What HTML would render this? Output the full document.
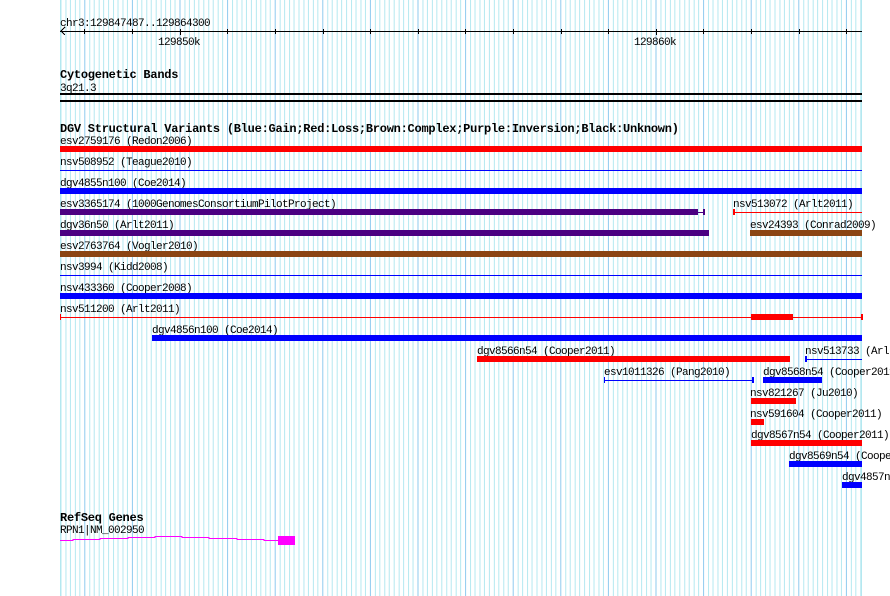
<!DOCTYPE html>
<html><head><meta charset="utf-8"><style>
html,body{margin:0;padding:0;background:#fff;width:890px;height:596px;overflow:hidden}
text{font-family:"Liberation Mono","DejaVu Sans Mono",monospace;font-size:11px;letter-spacing:-0.6px;fill:#000}
.b{font-weight:bold;font-size:12px;letter-spacing:-0.25px}
</style></head><body>
<svg width="890" height="596" xmlns="http://www.w3.org/2000/svg" shape-rendering="crispEdges">
<defs>
<pattern id="g" patternUnits="userSpaceOnUse" x="36.7" y="0" width="47.6" height="596">
<rect x="0" y="0" width="1" height="596" fill="#8ecaee"/>
<rect x="4.76" width="1" height="596" fill="#b4e8f0"/>
<rect x="9.52" width="1" height="596" fill="#b4e8f0"/>
<rect x="14.28" width="1" height="596" fill="#b4e8f0"/>
<rect x="19.04" width="1" height="596" fill="#b4e8f0"/>
<rect x="23.8" width="1" height="596" fill="#b4e8f0"/>
<rect x="28.56" width="1" height="596" fill="#b4e8f0"/>
<rect x="33.32" width="1" height="596" fill="#b4e8f0"/>
<rect x="38.08" width="1" height="596" fill="#b4e8f0"/>
<rect x="42.84" width="1" height="596" fill="#b4e8f0"/>
</pattern>
</defs>
<rect x="60" y="0" width="803" height="596" fill="url(#g)"/>
<rect x="60" y="0" width="1" height="596" fill="#b4e8f0"/>
<rect x="861" y="0" width="1" height="596" fill="#b4e8f0"/>

<text x="60" y="26">chr3:129847487..129864300</text>
<rect x="60" y="31" width="802" height="1" fill="#000"/>
<path d="M65 27 L61 31 L65 35" fill="none" stroke="#000" stroke-width="1"/>
<g fill="#000">
<rect x="84" y="29" width="1" height="5"/><rect x="132" y="29" width="1" height="5"/><rect x="180" y="29" width="1" height="6"/><rect x="227" y="29" width="1" height="5"/><rect x="275" y="29" width="1" height="5"/><rect x="323" y="29" width="1" height="5"/><rect x="370" y="29" width="1" height="5"/><rect x="418" y="29" width="1" height="5"/><rect x="465" y="29" width="1" height="5"/><rect x="513" y="29" width="1" height="5"/><rect x="561" y="29" width="1" height="5"/><rect x="608" y="29" width="1" height="5"/><rect x="656" y="29" width="1" height="6"/><rect x="703" y="29" width="1" height="5"/><rect x="751" y="29" width="1" height="5"/><rect x="799" y="29" width="1" height="5"/><rect x="846" y="29" width="1" height="5"/>
</g>
<text x="158" y="45">129850k</text>
<text x="634" y="45">129860k</text>

<text class="b" x="60" y="78">Cytogenetic Bands</text>
<text x="60" y="91">3q21.3</text>
<rect x="60" y="93" width="802" height="2" fill="#000"/>
<rect x="60" y="100" width="802" height="2" fill="#000"/>

<text class="b" x="60" y="132">DGV Structural Variants (Blue:Gain;Red:Loss;Brown:Complex;Purple:Inversion;Black:Unknown)</text>

<text x="60" y="144">esv2759176 (Redon2006)</text>
<rect x="60" y="146" width="802" height="6" fill="#f00"/>

<text x="60" y="165">nsv508952 (Teague2010)</text>
<rect x="60" y="170" width="802" height="1" fill="#00f"/>

<text x="60" y="186">dgv4855n100 (Coe2014)</text>
<rect x="60" y="188" width="802" height="6" fill="#00f"/>

<text x="60" y="207">esv3365174 (1000GenomesConsortiumPilotProject)</text>
<rect x="60" y="209" width="638" height="6" fill="#4b0082"/>
<rect x="698" y="212" width="6" height="1" fill="#4b0082"/>
<rect x="703" y="209" width="2" height="6" fill="#4b0082"/>
<text x="733" y="207">nsv513072 (Arlt2011)</text>
<rect x="734" y="212" width="128" height="1" fill="#f00"/>
<rect x="733" y="209" width="2" height="6" fill="#f00"/>

<text x="60" y="228">dgv36n50 (Arlt2011)</text>
<rect x="60" y="230" width="649" height="6" fill="#4b0082"/>
<text x="750" y="228">esv24393 (Conrad2009)</text>
<rect x="750" y="230" width="112" height="6" fill="#8b4513"/>

<text x="60" y="249">esv2763764 (Vogler2010)</text>
<rect x="60" y="251" width="802" height="6" fill="#8b4513"/>

<text x="60" y="270">nsv3994 (Kidd2008)</text>
<rect x="60" y="275" width="802" height="1" fill="#00f"/>

<text x="60" y="291">nsv433360 (Cooper2008)</text>
<rect x="60" y="293" width="802" height="6" fill="#00f"/>

<text x="60" y="312">nsv511200 (Arlt2011)</text>
<rect x="60" y="317" width="802" height="1" fill="#f00"/>
<rect x="60" y="314" width="1" height="6" fill="#f00"/>
<rect x="861" y="314" width="2" height="6" fill="#f00"/>
<rect x="751" y="314" width="42" height="6" fill="#f00"/>

<text x="152" y="333">dgv4856n100 (Coe2014)</text>
<rect x="152" y="335" width="710" height="6" fill="#00f"/>

<text x="477" y="354">dgv8566n54 (Cooper2011)</text>
<rect x="477" y="356" width="313" height="6" fill="#f00"/>
<text x="805" y="354">nsv513733 (Arlt2011)</text>
<rect x="806" y="359" width="56" height="1" fill="#00f"/>
<rect x="805" y="356" width="2" height="6" fill="#00f"/>

<text x="604" y="375">esv1011326 (Pang2010)</text>
<rect x="604" y="380" width="149" height="1" fill="#00f"/>
<rect x="604" y="377" width="1" height="6" fill="#00f"/>
<rect x="752" y="377" width="2" height="6" fill="#00f"/>
<text x="763" y="375">dgv8568n54 (Cooper2011)</text>
<rect x="763" y="377" width="59" height="6" fill="#00f"/>

<text x="750" y="396">nsv821267 (Ju2010)</text>
<rect x="751" y="398" width="45" height="6" fill="#f00"/>

<text x="750" y="417">nsv591604 (Cooper2011)</text>
<rect x="751" y="419" width="13" height="6" fill="#f00"/>

<text x="751" y="438">dgv8567n54 (Cooper2011)</text>
<rect x="751" y="440" width="111" height="6" fill="#f00"/>

<text x="789" y="459">dgv8569n54 (Cooper2011)</text>
<rect x="789" y="461" width="73" height="6" fill="#00f"/>

<text x="842" y="480">dgv4857n54</text>
<rect x="842" y="482" width="20" height="6" fill="#00f"/>

<text class="b" x="60" y="521">RefSeq Genes</text>
<text x="60" y="533">RPN1|NM_002950</text>
<path d="M60 540.5 H73 V539.5 H100 V538.5 H128 V537.5 H155 V536.5 H182 V537.5 H209 V538.5 H237 V539.5 H264 V540.5 H278" fill="none" stroke="#f0f" stroke-width="1"/>
<rect x="278" y="536" width="17" height="9" fill="#f0f"/>
</svg>
</body></html>
